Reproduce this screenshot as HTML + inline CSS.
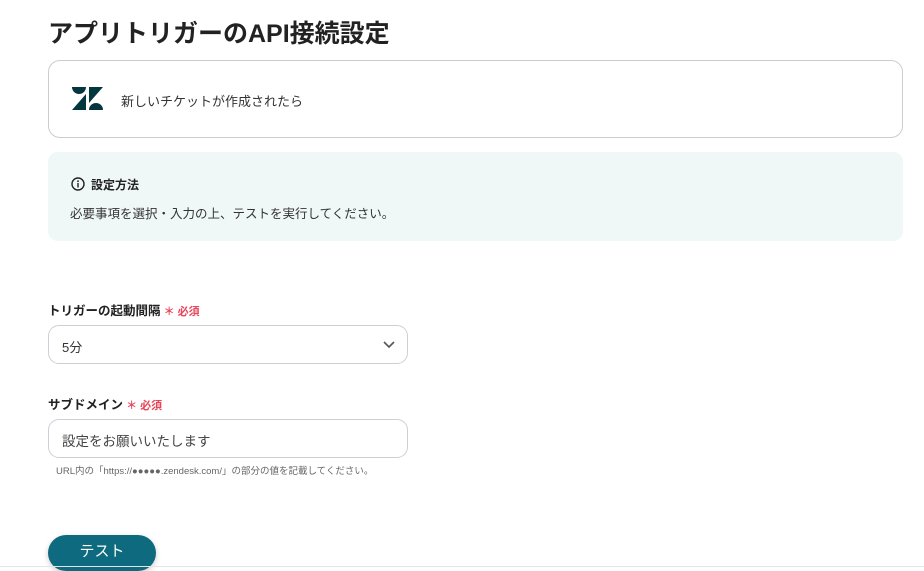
<!DOCTYPE html>
<html><head><meta charset="utf-8"><style>
body{margin:0;width:924px;height:568px;background:#fff;font-family:"Liberation Sans","Noto Sans CJK JP",sans-serif;color:#222;position:relative;overflow:hidden}
.a{position:absolute}
h1{position:absolute;left:48px;top:14px;margin:0;font-size:25px;font-weight:bold;color:#222;letter-spacing:0}
.card{left:48px;top:60px;width:853px;height:76px;border:1px solid #ccc;border-radius:12px}
.info{left:48px;top:152px;width:855px;height:89px;background:#eff8f7;border-radius:10px}
.lbl{font-size:12.5px;font-weight:bold;color:#222}
.req{color:#e8445a;font-size:11px;font-weight:bold}
.box{left:48px;width:358px;height:37px;border:1px solid #ccd0d6;border-radius:11px;font-size:13px;color:#333}
</style></head><body>
<h1>アプリトリガーのAPI接続設定</h1>
<div class="a card"></div>
<svg class="a" style="left:72px;top:87px" width="31" height="23" viewBox="0 0 31 23">
<path d="M0 0H14A7 7 0 0 1 0 0Z" fill="#03363d"/>
<path d="M17 0H31L17 16Z" fill="#03363d"/>
<path d="M0 23L14 7V23Z" fill="#03363d"/>
<path d="M17 23A7 7 0 0 1 31 23Z" fill="#03363d"/>
</svg>
<div class="a" style="left:121px;top:91px;font-size:13px;color:#333">新しいチケットが作成されたら</div>
<div class="a info"></div>
<svg class="a" style="left:71px;top:177px" width="14" height="14" viewBox="0 0 14 14"><circle cx="7" cy="7" r="6" fill="none" stroke="#222" stroke-width="1.4"/><rect x="6.3" y="6" width="1.4" height="4.5" fill="#222"/><circle cx="7" cy="4.2" r=".9" fill="#222"/></svg>
<div class="a" style="left:91px;top:176px;font-size:12px;font-weight:bold">設定方法</div>
<div class="a" style="left:70px;top:203px;font-size:12.5px;color:#333">必要事項を選択・入力の上、テストを実行してください。</div>
<div class="a lbl" style="left:48px;top:300px">トリガーの起動間隔<span class="req"> ＊ 必須</span></div>
<div class="a box" style="top:325px"><span style="position:absolute;left:13px;top:11px">5分</span>
<svg style="position:absolute;right:12px;top:15px" width="12" height="8" viewBox="0 0 12 8"><path d="M1 1L6 6L11 1" fill="none" stroke="#555" stroke-width="1.6"/></svg></div>
<div class="a lbl" style="left:48px;top:394px">サブドメイン<span class="req"> ＊ 必須</span></div>
<div class="a box" style="top:419px"><span style="position:absolute;left:13px;top:10px;font-size:13.5px;color:#444">設定をお願いいたします</span></div>
<div class="a" style="left:56px;top:463px;font-size:9.5px;color:#666">URL内の「https://●●●●●.zendesk.com/」の部分の値を記載してください。</div>
<div class="a" style="left:48px;top:535px;width:108px;height:36px;background:#0e6a7e;border-radius:18px;color:#fff;font-size:15px;text-align:center;line-height:34px;box-shadow:0 2px 6px rgba(0,0,0,.2)">テスト</div>
<div class="a" style="left:0;top:566px;width:924px;height:1px;background:#e4e4e4"></div>
</body></html>
